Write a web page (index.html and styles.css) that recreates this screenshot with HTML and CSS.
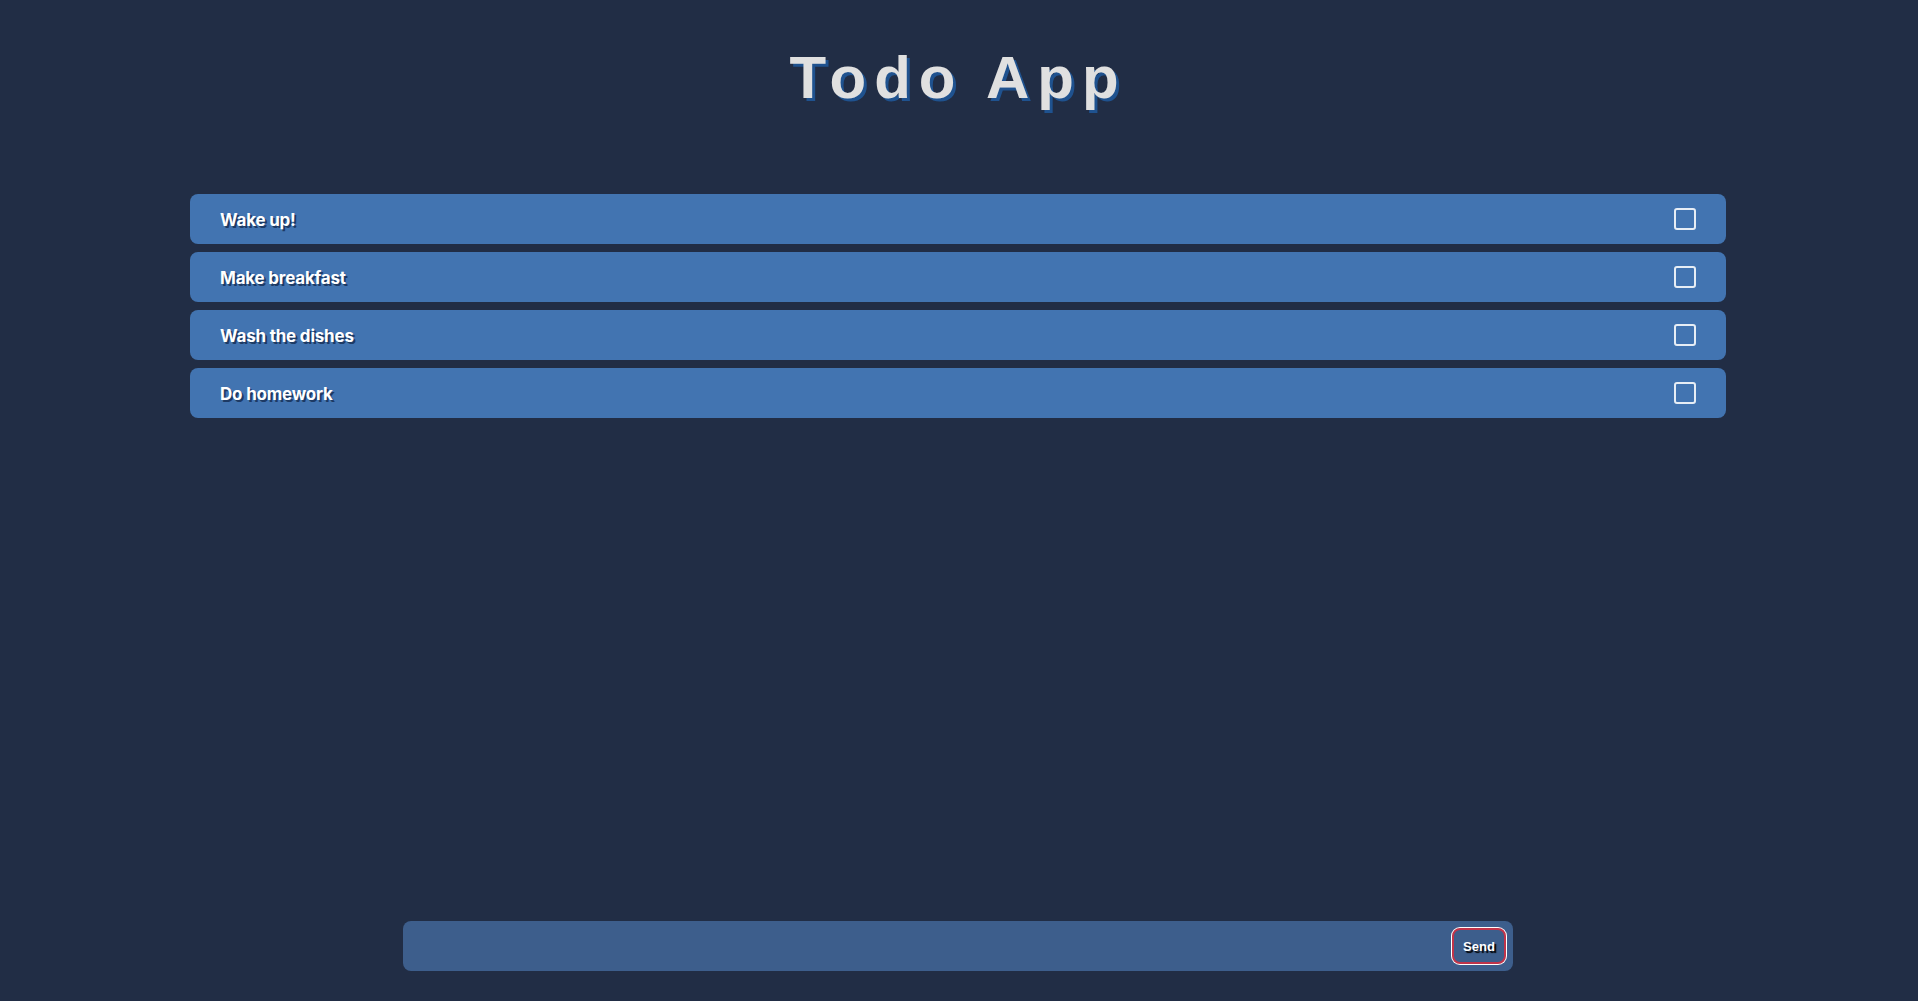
FILE: index.html
```html
<!DOCTYPE html>
<html lang="en">
<head>
<meta charset="utf-8">
<title>Todo App</title>
<link rel="stylesheet" href="styles.css">
</head>
<body>
<div class="app">
  <h1 class="title">Todo App</h1>
  <ul class="todo-list">
    <li class="todo-item"><span class="todo-text">Wake up!</span><span class="checkbox"></span></li>
    <li class="todo-item"><span class="todo-text">Make breakfast</span><span class="checkbox"></span></li>
    <li class="todo-item"><span class="todo-text">Wash the dishes</span><span class="checkbox"></span></li>
    <li class="todo-item"><span class="todo-text">Do homework</span><span class="checkbox"></span></li>
  </ul>
  <form class="composer">
    <input class="composer-input" type="text">
    <button class="send-btn" type="button">Send</button>
  </form>
</div>
</body>
</html>
```

FILE: styles.css
```css
html, body {
  margin: 0;
  padding: 0;
  height: 100%;
}
body {
  background: #212d45;
  font-family: "Inter", "Liberation Sans", sans-serif;
}
.app {
  min-height: 100vh;
  display: flex;
  flex-direction: column;
  align-items: center;
  box-sizing: border-box;
  padding: 44px 2px 30px 0;
}
.title {
  margin: 0;
  font-family: "Liberation Sans", Arial, sans-serif;
  font-size: 60px;
  font-weight: 700;
  letter-spacing: 8px;
  line-height: 67px;
  color: #e0e0e0;
  text-shadow: 3px 3px 0 #1f528f;
}
.todo-list {
  list-style: none;
  margin: 83px 0 0;
  padding: 0;
  width: 1536px;
  display: flex;
  flex-direction: column;
  gap: 8px;
}
.todo-item {
  height: 50px;
  background: #4274b1;
  border-radius: 8px;
  display: flex;
  align-items: center;
  justify-content: space-between;
  padding: 1px 30px 0;
  box-sizing: border-box;
}
.todo-text {
  color: #ffffff;
  font-size: 17px;
  font-weight: 700;
  letter-spacing: -0.2px;
  text-shadow: 2px 2px 0 #1d3a64;
}
.checkbox {
  width: 22px;
  height: 22px;
  margin-top: -1px;
  box-sizing: border-box;
  border: 2px solid #e6edf5;
  border-radius: 3px;
}
.composer {
  margin-top: auto;
  width: 1110px;
  height: 50px;
  background: #3d5e8c;
  border-radius: 8px;
  display: flex;
  align-items: center;
  padding: 0 7px 0 0;
  box-sizing: border-box;
}
.composer-input {
  flex: 1;
  height: 100%;
  background: transparent;
  border: none;
  outline: none;
  padding: 0 16px;
}
.send-btn {
  width: 54px;
  height: 36px;
  box-sizing: border-box;
  background: #3d5e8c;
  border: 2px solid #c0344a;
  box-shadow: 0 0 0 1px #ffffff;
  border-radius: 8px;
  color: #ffffff;
  font-family: "Liberation Sans", Arial, sans-serif;
  font-weight: 700;
  font-size: 13px;
  text-shadow: 2px 2px 1px #000000;
  padding: 0;
  cursor: pointer;
}
```
